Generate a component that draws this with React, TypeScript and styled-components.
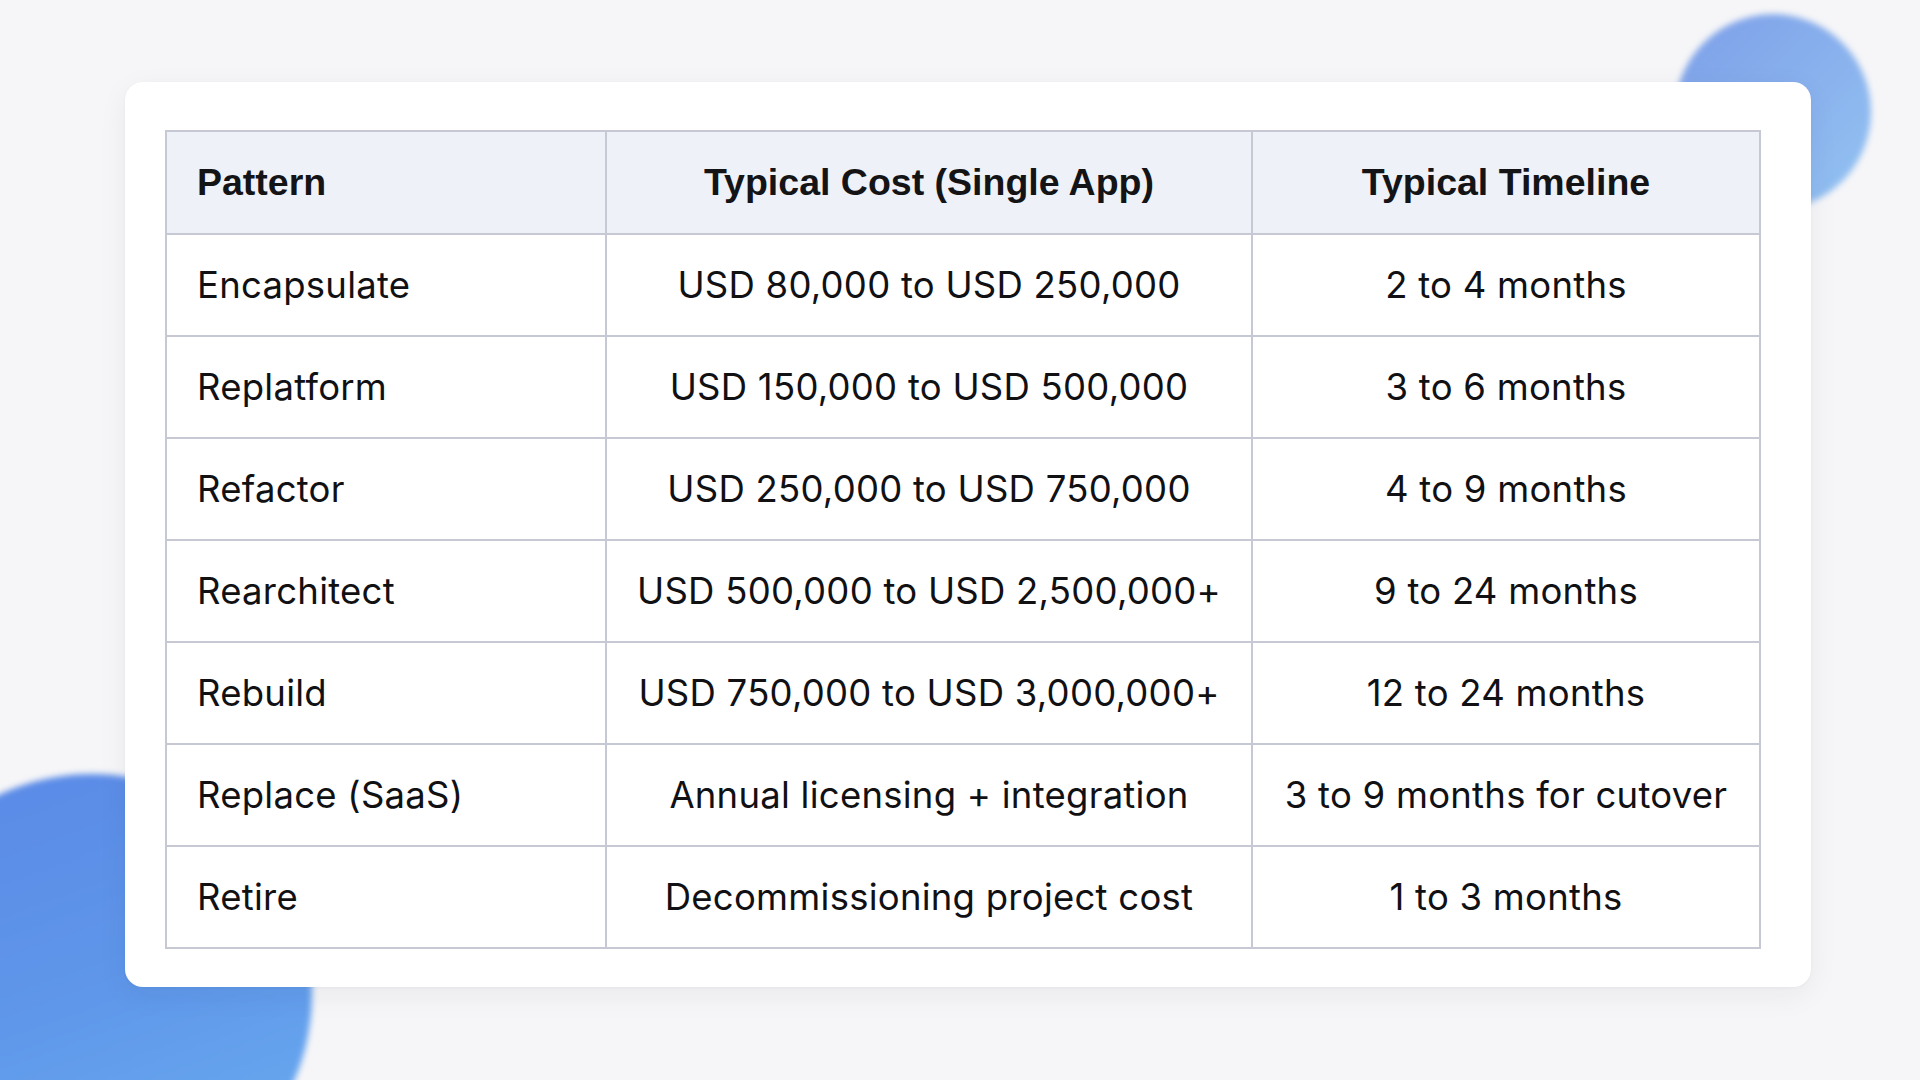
import React from 'react';
import styled, { createGlobalStyle } from 'styled-components';

interface RowData {
  pattern: string;
  cost: string;
  timeline: string;
}

const rows: RowData[] = [
  { pattern: 'Encapsulate', cost: 'USD 80,000 to USD 250,000', timeline: '2 to 4 months' },
  { pattern: 'Replatform', cost: 'USD 150,000 to USD 500,000', timeline: '3 to 6 months' },
  { pattern: 'Refactor', cost: 'USD 250,000 to USD 750,000', timeline: '4 to 9 months' },
  { pattern: 'Rearchitect', cost: 'USD 500,000 to USD 2,500,000+', timeline: '9 to 24 months' },
  { pattern: 'Rebuild', cost: 'USD 750,000 to USD 3,000,000+', timeline: '12 to 24 months' },
  { pattern: 'Replace (SaaS)', cost: 'Annual licensing + integration', timeline: '3 to 9 months for cutover' },
  { pattern: 'Retire', cost: 'Decommissioning project cost', timeline: '1 to 3 months' },
];

function App(): JSX.Element {
  return (
    <>
      <GlobalStyle />
      <Page>
        <BlobTop />
        <BlobBottom />
        <Card>
          <Table>
            <colgroup>
              <col style={{ width: 440 }} />
              <col style={{ width: 646 }} />
              <col style={{ width: 508 }} />
            </colgroup>
            <thead>
              <tr>
                <HeadCell $align="left">Pattern</HeadCell>
                <HeadCell $align="center">Typical Cost (Single App)</HeadCell>
                <HeadCell $align="center">Typical Timeline</HeadCell>
              </tr>
            </thead>
            <tbody>
              {rows.map((row) => (
                <tr key={row.pattern}>
                  <Cell $align="left">{row.pattern}</Cell>
                  <Cell $align="center">{row.cost}</Cell>
                  <Cell $align="center">{row.timeline}</Cell>
                </tr>
              ))}
            </tbody>
          </Table>
        </Card>
      </Page>
    </>
  );
}

export default App;

const GlobalStyle = createGlobalStyle`
  html, body {
    margin: 0;
    padding: 0;
    background: #f6f6f8;
  }
  * {
    box-sizing: border-box;
  }
`;

const Page = styled.main`
  position: relative;
  width: 1920px;
  height: 1080px;
  overflow: hidden;
  padding: 82px 0 0 125px;
  background: #f6f6f8;
  font-family: Inter, 'Noto Sans', sans-serif;
  color: #111114;
`;

const BlobTop = styled.div`
  position: absolute;
  left: 1675px;
  top: 14px;
  width: 196px;
  height: 196px;
  border-radius: 50%;
  background: linear-gradient(135deg, #7d9fe8 0%, #8bb4ee 60%, #93c3f2 100%);
  filter: blur(3px);
`;

const BlobBottom = styled.div`
  position: absolute;
  left: -128px;
  top: 774px;
  width: 440px;
  height: 440px;
  border-radius: 50%;
  background: linear-gradient(160deg, #5a88e6 0%, #5f97ea 50%, #6cb0f1 100%);
  filter: blur(3px);
`;

const Card = styled.section`
  position: relative;
  width: 1686px;
  height: 905px;
  padding: 48px 49px 37px 40px;
  background: #ffffff;
  border-radius: 18px;
  box-shadow: 0 8px 30px rgba(30, 40, 70, 0.06), 0 1px 3px rgba(30, 40, 70, 0.04);
`;

const Table = styled.table`
  width: 1594px;
  border-collapse: collapse;
  table-layout: fixed;
`;

const HeadCell = styled.th<{ $align: 'left' | 'center' }>`
  height: 103px;
  padding: 0 30px;
  text-align: ${(p) => p.$align};
  vertical-align: middle;
  background: #eef1f8;
  border: 2px solid #c6c9d3;
  font-family: 'Liberation Sans', Arial, sans-serif;
  font-size: 37.5px;
  font-weight: 700;
  color: #141416;
`;

const Cell = styled.td<{ $align: 'left' | 'center' }>`
  height: 102px;
  padding: 0 30px;
  text-align: ${(p) => p.$align};
  vertical-align: middle;
  border: 2px solid #c6c9d3;
  font-size: 36.5px;
  font-weight: 400;
  letter-spacing: 0.25px;
  color: #111114;
  white-space: nowrap;
`;
